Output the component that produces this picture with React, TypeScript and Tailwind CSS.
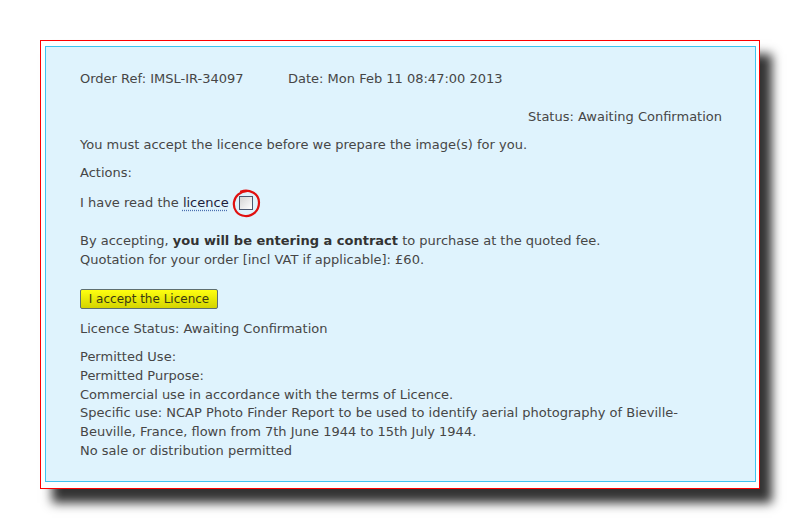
import React from "react";

export default function App() {
  return (
    <div className="w-[800px] h-[529px] bg-white pt-[40px] pl-[40px]">
      <div className="w-[720px] h-[449px] border border-[#ff0000] bg-white pt-[5px] pl-[4px] pr-[3px] pb-[6px] shadow-[12px_14px_10px_rgba(0,0,0,0.8)]">
        <div
          className="h-full border border-[#3ec3f0] bg-[#dff3fd] pl-[34px] pr-[33px] pt-[22px] text-[13px] leading-[19px] text-[#464646]"
          style={{ fontFamily: '"DejaVu Sans", Verdana, sans-serif' }}
        >
          <div className="flex">
            <span className="w-[208px] shrink-0">Order Ref: IMSL-IR-34097</span>
            <span>Date: Mon Feb 11 08:47:00 2013</span>
          </div>
          <div className="mt-[19px] text-right">Status: Awaiting Confirmation</div>
          <div className="mt-[9px]">You must accept the licence before we prepare the image(s) for you.</div>
          <div className="mt-[9px]">Actions:</div>
          <div className="mt-[11px] flex items-center">
            <span className="whitespace-pre">I have read the </span>
            <span className="text-[#1e1e3c] underline decoration-dotted decoration-[#4a6fb0] underline-offset-[3px]">licence</span>
            <span className="relative ml-[10px] inline-block w-[14px] h-[14px] border border-[#4a5870] bg-gradient-to-br from-[#d4d4d4] to-[#ffffff]">
              <svg className="absolute left-[-9px] top-[-9px]" width="31" height="31" viewBox="0 0 31 31">
                <path d="M10 3.5 C 18 1, 28 5, 28 14.5 C 28 23, 21.5 28.5, 14 28 C 6 27.5, 2 21, 3 14 C 4 8, 9 3.5, 16.5 3" fill="none" stroke="#e01010" strokeWidth="2.2" strokeLinecap="round" />
              </svg>
            </span>
          </div>
          <div className="mt-[19px]">
            By accepting, <b className="font-bold text-[#333]">you will be entering a contract</b> to purchase at the quoted fee.
            <br />
            Quotation for your order [incl VAT if applicable]: £60.
          </div>
          <div className="mt-[20px]">
            <button className="h-[20px] w-[138px] border border-[#5f6f70] rounded-[2px] bg-gradient-to-b from-[#ffff10] to-[#d4d400] text-[12px] leading-[18px] text-[#3a3a10] text-center">
              I accept the Licence
            </button>
          </div>
          <div className="mt-[10px]">Licence Status: Awaiting Confirmation</div>
          <div className="mt-[10px] leading-[18.8px]">
            Permitted Use:
            <br />
            Permitted Purpose:
            <br />
            Commercial use in accordance with the terms of Licence.
            <br />
            Specific use: NCAP Photo Finder Report to be used to identify aerial photography of Bieville-
            <br />
            Beuville, France, flown from 7th June 1944 to 15th July 1944.
            <br />
            No sale or distribution permitted
          </div>
        </div>
      </div>
    </div>
  );
}
